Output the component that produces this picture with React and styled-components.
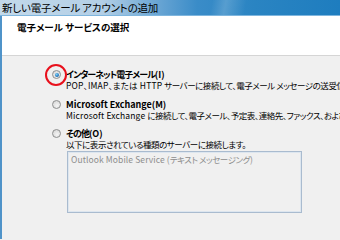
import React from "react";
import styled, { createGlobalStyle } from "styled-components";

const Global = createGlobalStyle`
  html, body { margin: 0; padding: 0; background: #f0f0f0; }
  body { font-family: "Noto Sans CJK JP", "Noto Sans", sans-serif; }
`;

const Window = styled.div`
  width: 340px;
  height: 239px;
  display: flex;
  flex-direction: column;
  overflow: hidden;
  background: #f0f0f0;
`;

const TitleBar = styled.div`
  height: 15px;
  flex: none;
  display: flex;
  align-items: center;
  padding-left: 2px;
  border-bottom: 1px solid #7fb6de;
  background:
    linear-gradient(100deg, transparent 62%, rgba(255,255,255,0.18) 66%, transparent 72%),
    linear-gradient(90deg, #c3d9ea 0%, #b3cfe6 30%, #6ba6d4 46%, #3a8cc8 58%, #2a84c2 75%, #1e7dbf 100%);
`;

const TitleText = styled.span`
  font-size: 10.5px;
  line-height: 15px;
  color: #000;
  white-space: nowrap;
  font-feature-settings: "palt";
  letter-spacing: -0.2px;
`;

const Frame = styled.div`
  flex: 1;
  display: flex;
  min-height: 0;
`;

const SideBorder = styled.div`
  width: 2px;
  flex: none;
  background: #4f93c9;
`;

const Content = styled.div`
  flex: 1;
  display: flex;
  flex-direction: column;
  min-width: 0;
`;

const Header = styled.div`
  height: 40px;
  flex: none;
  background: #fff;
  border-bottom: 1px solid #d5d5d5;
  padding: 5px 0 0 15px;
  box-sizing: border-box;
`;

const HeaderText = styled.div`
  font-size: 9.5px;
  font-weight: bold;
  line-height: 13px;
  color: #000;
  font-feature-settings: "palt";
`;

const Body = styled.div`
  flex: 1;
  padding: 13px 0 0 50px;
  display: flex;
  flex-direction: column;
  position: relative;
  overflow: hidden;
`;

const Option = styled.div`
  display: grid;
  grid-template-columns: 9px 1fr;
  column-gap: 5px;
  margin-bottom: ${(p) => p.$gap || 0}px;
`;

const Radio = styled.span`
  width: 9px;
  height: 9px;
  margin-top: 1px;
  border-radius: 50%;
  box-sizing: border-box;
  border: 1px solid #8e8f8f;
  background: radial-gradient(circle at 60% 65%, #f4f4f4 0%, #dcdcdc 70%, #c8c8c8 100%);
  display: flex;
  align-items: center;
  justify-content: center;
  position: relative;
`;

const Dot = styled.span`
  width: 4px;
  height: 4px;
  border-radius: 50%;
  background: radial-gradient(circle at 40% 35%, #7fd0f5 0%, #2a7fc4 55%, #14508a 100%);
`;

const Highlight = styled.span`
  position: absolute;
  left: 50%;
  top: 50%;
  width: 22px;
  height: 22px;
  margin: -11px 0 0 -11.5px;
  border: 2.5px solid #e8101c;
  border-radius: 50%;
  box-sizing: border-box;
`;

const Label = styled.div`
  font-size: 9px;
  font-weight: bold;
  line-height: 11px;
  color: #000;
  white-space: nowrap;
  font-feature-settings: "palt";
`;

const Jp = styled.span`
  letter-spacing: ${(p) => (p.$bold ? -1 : -0.45)}px;
`;

const Desc = styled.div`
  grid-column: 2;
  font-size: 8.5px;
  line-height: 11px;
  color: #000;
  white-space: nowrap;
  font-feature-settings: "palt";
  letter-spacing: 0.15px;
  overflow: hidden;
`;

const ListBox = styled.div`
  margin: 1px 0 0 15px;
  width: 235px;
  height: 62px;
  box-sizing: border-box;
  border: 1px solid #a9bbcf;
  box-shadow: inset 0 0 0 1px #dde6ef;
  padding: 2px 3px;
  background: #f0f0f0;
`;

const ListItem = styled.div`
  font-size: 8.5px;
  line-height: 11px;
  color: #8d8d8d;
  white-space: nowrap;
  font-feature-settings: "palt";
  letter-spacing: 0.1px;
`;

export default function App() {
  return (
    <>
      <Global />
      <Window>
        <TitleBar>
          <TitleText>新しい電子メール アカウントの追加</TitleText>
        </TitleBar>
        <Frame>
          <SideBorder />
          <Content>
            <Header>
              <HeaderText>電子メール サービスの選択</HeaderText>
            </Header>
            <Body>
              <Option $gap={8}>
                <Radio>
                  <Dot />
                  <Highlight />
                </Radio>
                <Label>
                  <Jp $bold>インターネット電子メール</Jp>(I)
                </Label>
                <Desc>
                  POP、IMAP、または HTTP <Jp>サーバーに接続して、電子メール メッセージの送受信を行います。</Jp>
                </Desc>
              </Option>
              <Option $gap={7}>
                <Radio />
                <Label>Microsoft Exchange(M)</Label>
                <Desc>
                  Microsoft Exchange <Jp>に接続して、電子メール、予定表、連絡先、ファックス、およびボイス メールにアクセスします。</Jp>
                </Desc>
              </Option>
              <Option $gap={0}>
                <Radio />
                <Label>
                  <Jp $bold>その他</Jp>(O)
                </Label>
                <Desc>
                  <Jp>以下に表示されている種類のサーバーに接続します。</Jp>
                </Desc>
              </Option>
              <ListBox>
                <ListItem>
                  Outlook Mobile Service (<Jp>テキスト メッセージング</Jp>)
                </ListItem>
              </ListBox>
            </Body>
          </Content>
        </Frame>
      </Window>
    </>
  );
}
